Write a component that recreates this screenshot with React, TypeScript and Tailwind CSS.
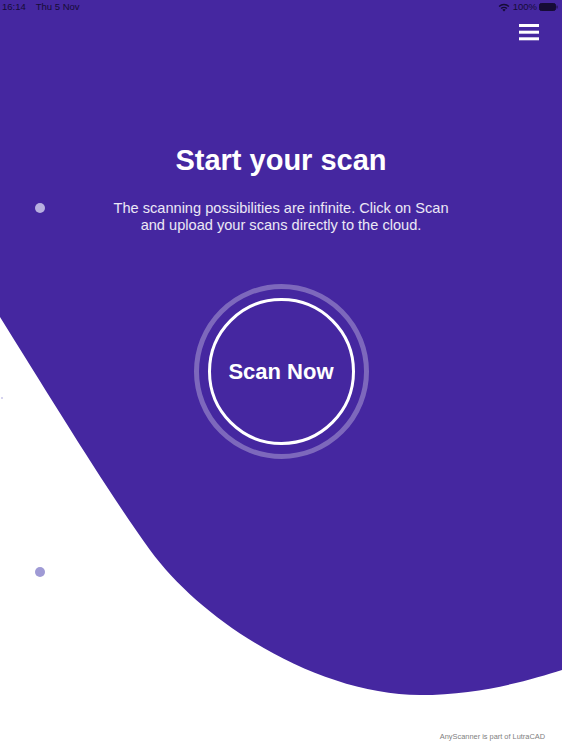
import React from "react"

const font = { fontFamily: '"Liberation Sans", Arial, Helvetica, sans-serif' }

function StatusBar() {
  return (
    <div className="flex h-[14px] items-center justify-between px-[1px] text-[9.5px] text-[#160c36]">
      <div className="flex items-center gap-[10px] pl-[1px]">
        <span>16:14</span>
        <span>Thu 5 Nov</span>
      </div>
      <div className="flex items-center gap-[2px] pr-[3px]">
        <svg width="12" height="9" viewBox="0 0 12 9" className="mr-[1px]">
          <path d="M6 8.6 L4.3 6.8 A2.5 2.5 0 0 1 7.7 6.8 Z" fill="#160c36" />
          <path d="M2.6 5.1 A4.9 4.9 0 0 1 9.4 5.1 L8.4 6.1 A3.5 3.5 0 0 0 3.6 6.1 Z" fill="#160c36" />
          <path d="M0.6 3.1 A7.6 7.6 0 0 1 11.4 3.1 L10.4 4.1 A6.2 6.2 0 0 0 1.6 4.1 Z" fill="#160c36" />
        </svg>
        <span>100%</span>
        <svg width="19" height="8" viewBox="0 0 19 8">
          <rect x="0.5" y="0.5" width="16" height="7" rx="1.8" fill="#160c36" stroke="#160c36" strokeWidth="1" />
          <rect x="17.3" y="2.5" width="1.5" height="3" rx="0.6" fill="#160c36" opacity="0.6" />
        </svg>
      </div>
    </div>
  )
}

function Wave() {
  return (
    <svg className="absolute inset-0" width="562" height="750" viewBox="0 0 562 750" preserveAspectRatio="none">
      <path
        d="M0 0 H562 V670 C530 680 480 695 420 695 C320 695 205 625 150 550 C110 495 50 397 0 317 Z"
        fill="#4527a0"
      />
    </svg>
  )
}

export default function App() {
  return (
    <div className="relative h-[750px] w-full overflow-hidden bg-white" style={font}>
      <Wave />

      {/* side dots */}
      <span className="absolute left-[35px] top-[203px] h-[10px] w-[10px] rounded-full bg-[#b8b0e0]" />
      <span className="absolute left-[35px] top-[567px] h-[10px] w-[10px] rounded-full bg-[#9f9ad5]" />
      <span className="absolute left-[1px] top-[397px] h-[2px] w-[2px] rounded-full bg-[#c9c5ea]" />

      <div className="relative flex h-full flex-col">
        <StatusBar />

        <div className="flex justify-end pr-[23px] pt-[10px]">
          <button className="block">
            <svg width="20" height="17" viewBox="0 0 20 17">
              <rect x="0" y="0" width="20" height="3" fill="#fff" />
              <rect x="0" y="6.7" width="20" height="3" fill="#fff" />
              <rect x="0" y="13.3" width="20" height="3" fill="#fff" />
            </svg>
          </button>
        </div>

        <h1 className="mt-[105px] text-center text-[29px] font-bold leading-[29px] text-white">
          Start your scan
        </h1>

        <p className="mt-[25px] text-center text-[14.6px] leading-[17px] text-white/90">
          The scanning possibilities are infinite. Click on Scan
          <br />
          and upload your scans directly to the cloud.
        </p>

        <div className="mt-[50px] flex justify-center">
          <div className="flex h-[175px] w-[175px] items-center justify-center rounded-full border-[5px] border-white/30">
            <button className="flex h-[147px] w-[147px] items-center justify-center rounded-full border-[3px] border-white text-[22px] font-bold text-white">
              Scan Now
            </button>
          </div>
        </div>

        <div className="mt-auto pb-[9px] pr-[17px] text-right text-[7.4px] leading-[9px] text-[#808080]">
          AnyScanner is part of LutraCAD
        </div>
      </div>
    </div>
  )
}
